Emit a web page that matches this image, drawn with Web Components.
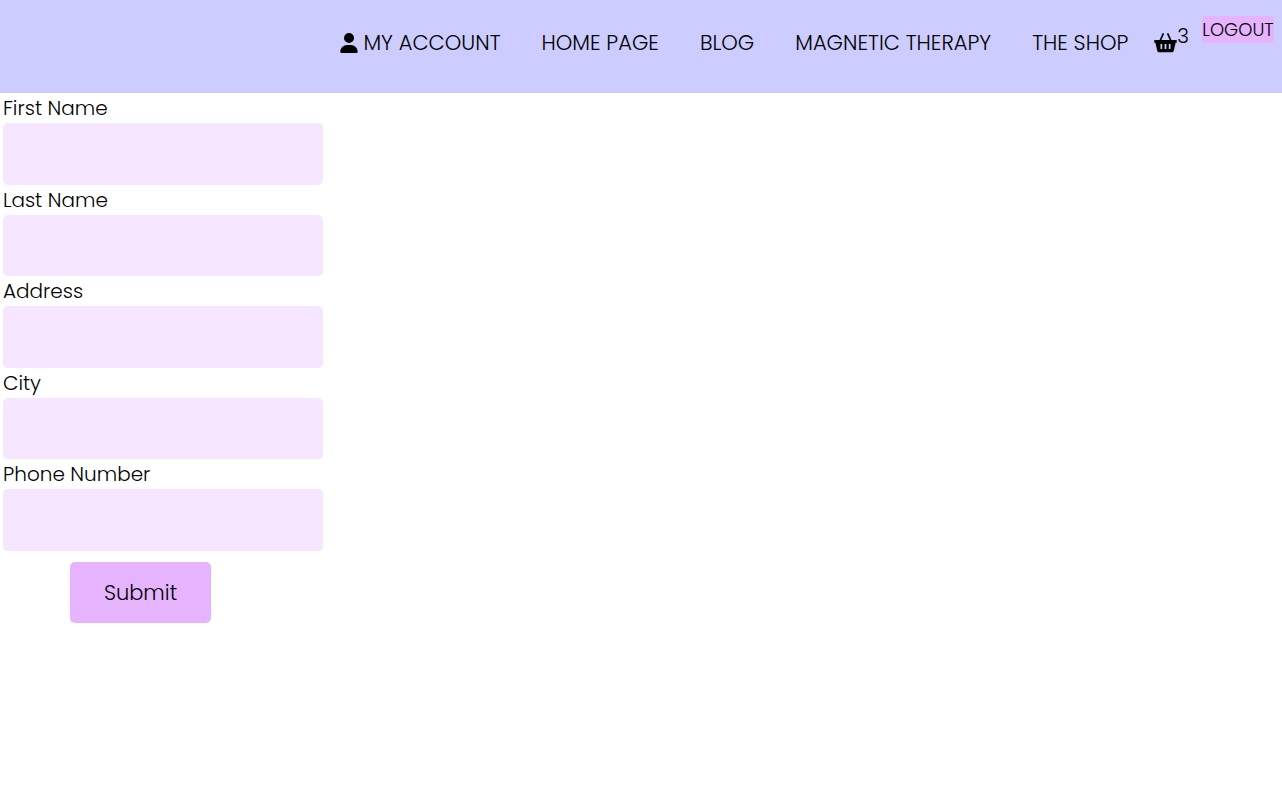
<!DOCTYPE html>
<html lang="en">
<head>
<meta charset="utf-8">
<meta name="viewport" content="width=device-width, initial-scale=1">
<title>My account</title>
<style>
  body {
    margin: 0;
    background: #fff;
    color: #000;
    font-family: Poppins, Inter, sans-serif;
    font-size: 20px;
    font-weight: 300;
    line-height: 30px;
    --bar: #ccccff;
    --accent: #e6b3ff;
    --field: #f7e6ff;
  }
</style>
</head>
<body>
<site-header>
  <nav-item href="#account"><user-icon slot="icon"></user-icon>MY ACCOUNT</nav-item>
  <nav-item href="#home">HOME PAGE</nav-item>
  <nav-item href="#blog">BLOG</nav-item>
  <nav-item href="#therapy">MAGNETIC THERAPY</nav-item>
  <nav-item href="#shop">THE SHOP</nav-item>
  <basket-link slot="tools">3</basket-link>
  <logout-button slot="tools">LOGOUT</logout-button>
</site-header>
<account-form>
  <form-field name="firstName">First Name</form-field>
  <form-field name="lastName">Last Name</form-field>
  <form-field name="address">Address</form-field>
  <form-field name="city">City</form-field>
  <form-field name="phone" type="tel">Phone Number</form-field>
</account-form>
<script>
  function define(name, html, setup) {
    const template = document.createElement('template');
    template.innerHTML = html;
    customElements.define(name, class extends HTMLElement {
      constructor() {
        super();
        this.attachShadow({ mode: 'open' }).append(template.content.cloneNode(true));
      }
      connectedCallback() {
        if (setup) setup(this, this.shadowRoot);
      }
    });
  }

  define('site-header', `
    <style>
      :host { display: block; background: var(--bar); }
      header { display: flex; justify-content: flex-end; align-items: flex-start; min-height: 77px; padding: 16px 8px 0; }
      nav { display: flex; gap: 41px; padding-top: 12px; margin-right: 26px; font-size: 21px; }
      .tools { display: flex; align-items: flex-start; gap: 13px; }
    </style>
    <header>
      <nav aria-label="Main"><slot></slot></nav>
      <div class="tools"><slot name="tools"></slot></div>
    </header>`);

  define('nav-item', `
    <style>
      :host { display: block; }
      a { display: flex; align-items: center; gap: 5px; color: inherit; text-decoration: none; white-space: nowrap; }
    </style>
    <a><slot name="icon"></slot><span><slot></slot></span></a>`,
    (el, root) => { root.querySelector('a').href = el.getAttribute('href'); });

  define('user-icon', `
    <style>
      :host { display: block; }
      svg { display: block; width: 18px; height: 20px; }
    </style>
    <svg viewBox="0 0 448 512" aria-hidden="true"><path d="M224 256A128 128 0 1 0 224 0a128 128 0 1 0 0 256zm-45.7 48C79.8 304 0 383.8 0 482.3C0 498.7 13.3 512 29.7 512H418.3c16.4 0 29.7-13.3 29.7-29.7C448 383.8 368.2 304 269.7 304H178.3z"/></svg>`);

  define('basket-link', `
    <style>
      :host { display: block; }
      a { display: flex; align-items: flex-start; padding-top: 5px; color: inherit; text-decoration: none; }
      svg { display: block; width: 23px; height: 20px; margin-top: 12px; }
    </style>
    <a href="#basket" aria-label="Basket"><svg viewBox="0 0 23 20" aria-hidden="true"><path fill-rule="evenodd" d="M0.3 7H22.7V9.8H21.6L19.7 18Q19.3 19.2 18 19.2H5Q3.7 19.2 3.3 18L1.4 9.8H0.3ZM6.5 11V16H8.2V11ZM10.6 11V16H12.4V11ZM14.8 11V16H16.5V11Z"/><path d="M9.4 0.4L6.2 7.5M13.6 0.4L16.8 7.5" fill="none" stroke="#000" stroke-width="1.7"/></svg><span><slot></slot></span></a>`);

  define('logout-button', `
    <style>
      :host { display: block; }
      button { display: block; min-width: 72px; border: 0; border-radius: 4px; padding: 0; background: var(--accent); color: inherit; font: inherit; font-size: 18px; line-height: 27px; cursor: pointer; }
    </style>
    <button type="button"><slot></slot></button>`);

  define('account-form', `
    <style>
      :host { display: block; padding: 0 3px; }
      form { max-width: 320px; }
      .fields { display: grid; grid-auto-rows: 1fr; min-height: 458px; }
      button { margin: 11px 0 0 67px; border: 0; border-radius: 5px; padding: 1px 0 0; min-width: 141px; background: var(--accent); color: inherit; font: inherit; font-size: 21px; line-height: 60px; cursor: pointer; }
    </style>
    <form><div class="fields"><slot></slot></div><button type="submit">Submit</button></form>`);

  define('form-field', `
    <style>
      :host { display: flex; flex-direction: column; }
      label { display: block; }
      input { flex: 1; display: block; box-sizing: border-box; width: 100%; border: 0; border-radius: 5px; padding: 0 16px; background: var(--field); color: inherit; font: inherit; }
    </style>
    <label for="control"><slot></slot></label>
    <input id="control">`,
    (el, root) => {
      const input = root.querySelector('input');
      input.name = el.getAttribute('name');
      input.type = el.getAttribute('type') || 'text';
    });
</script>
</body>
</html>
